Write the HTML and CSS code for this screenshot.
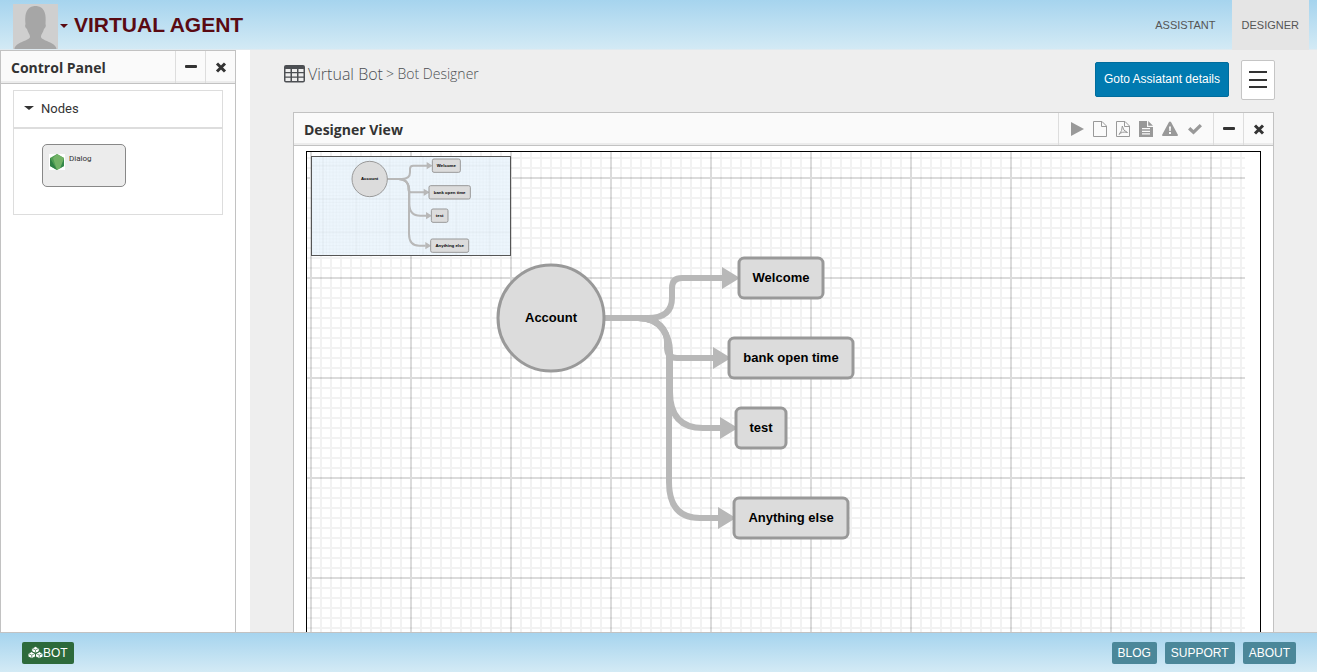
FILE: index.html
```html
<!DOCTYPE html>
<html lang="en">
<head>
<meta charset="utf-8">
<title>Virtual Agent</title>
<link rel="stylesheet" href="styles.css">
</head>
<body>
<header class="topbar">
  <button class="avatar" type="button" aria-label="Account menu">
    <svg width="45" height="45" viewBox="0 0 45 45"><rect width="45" height="45" fill="#cfcfcf"/><path d="M12.500 20C11 5 17 2 22.500 2S34 5 32.500 20C33.500 22 32 24 31 25C30 29 28 30 28 33C29 37 43 38 43.500 45H1.500C2 38 16 37 17 33C17 30 15 29 14 25C12.500 24 11.500 22 12.500 20Z" fill="#a6a6a6"/></svg>
    <span class="caret"></span>
  </button>
  <h1 class="brand">VIRTUAL AGENT</h1>
  <nav class="topnav">
    <a href="#assistant">ASSISTANT</a>
    <a href="#designer" class="active">DESIGNER</a>
  </nav>
</header>

<div class="body">
  <aside class="sidebar">
    <section class="panel side-panel">
      <div class="panel-head">
        <h2>Control Panel</h2>
        <button class="tool" type="button" aria-label="Collapse"><svg width="12" height="12"><rect y="4" width="12" height="3" rx="1"/></svg></button>
        <button class="tool" type="button" aria-label="Close"><svg width="12" height="12"><path d="M2 2.500L10 10.500M10 2.500L2 10.500"/></svg></button>
      </div>
      <div class="palette">
        <button class="palette-head" type="button"><span class="caret"></span>Nodes</button>
        <div class="palette-body">
          <div class="node-card">
            <svg width="16" height="16" viewBox="0 0 16 16"><rect width="16" height="16" fill="#fff"/><path d="M8 0L15 4V12L8 16L1 12V4Z" fill="#4f9d52"/><path d="M8 0L15 4L12 13.700L8 16L4 4Z" fill="#72b266"/><path d="M1 4L8 16L1 12Z" fill="#2f8044"/><path d="M15 5V12L11 14.200Z" fill="#35884a"/></svg>
            <span>Dialog</span>
          </div>
        </div>
      </div>
    </section>
  </aside>

  <main class="content">
    <div class="page-head">
      <div class="crumbs">
        <svg width="21" height="18" viewBox="0 0 21 18"><path fill="#4c4f53" fill-rule="evenodd" d="M2 0H19Q21 0 21 2V15.500Q21 17.500 19 17.500H2Q0 17.500 0 15.500V2Q0 0 2 0ZM1.500 4H6.500V7H1.500ZM8 4H13V7H8ZM14.500 4H19.500V7H14.500ZM1.500 8.300H6.500V11.500H1.500ZM8 8.300H13V11.500H8ZM14.500 8.300H19.500V11.500H14.500ZM1.500 12.800H6.500V16H1.500ZM8 12.800H13V16H8ZM14.500 12.800H19.500V16H14.500Z"/></svg>
        <span class="crumb-root">Virtual Bot</span>
        <span class="crumb-page">&gt; Bot Designer</span>
      </div>
      <div class="actions">
        <button class="primary" type="button">Goto Assiatant details</button>
        <button class="menu" type="button" aria-label="Menu"><svg width="18" height="18"><path d="M0 1H18M0 9H18M0 16H18" stroke="#333" stroke-width="2"/></svg></button>
      </div>
    </div>

    <section class="panel view-panel">
      <div class="panel-head">
        <h2>Designer View</h2>
        <div class="tools">
          <button type="button" aria-label="Run"><svg width="14" height="16"><path d="M1 1L14 8L1 15Z"/></svg></button>
          <button type="button" aria-label="New"><svg class="line" width="14" height="16"><path d="M.500.500H9L13.500 5V15.500H.500ZM8.500.500V5.500H13.500"/></svg></button>
          <button type="button" aria-label="Export PDF"><svg class="line" width="14" height="16"><path d="M.500.500H9L13.500 5V15.500H.500ZM8.500.500V5.500H13.500M3 13.500Q6.500 10 6.300 5Q7 10 11.500 11.500Q6 10 3 13.500"/></svg></button>
          <button type="button" aria-label="Text file"><svg width="14" height="16"><path fill-rule="evenodd" d="M0 0H8V6H14V16H0ZM3 7V8.200H11V7ZM3 9.700V11H11V9.700ZM3 12.300V13.500H11V12.300ZM9.200 0L14 4.800H9.200Z"/></svg></button>
          <button type="button" aria-label="Warnings"><svg width="16" height="16"><path fill-rule="evenodd" d="M7 1Q8 0 9 1L16 14Q16 15 15 15H1Q0 15 0 14ZM7 5.500L7.300 10H8.700L9 5.500ZM7 11V13H9V11Z"/></svg></button>
          <button type="button" aria-label="Validate"><svg width="16" height="16"><path d="M1 8.500L3.300 6L6.500 9L12.700 3L15 5.300L6.500 13.500Z"/></svg></button>
        </div>
        <button class="tool" type="button" aria-label="Collapse view"><svg width="12" height="12"><rect y="4" width="12" height="3" rx="1"/></svg></button>
        <button class="tool" type="button" aria-label="Close view"><svg width="12" height="12"><path d="M2 2.500L10 10.500M10 2.500L2 10.500"/></svg></button>
      </div>
      <div class="canvas">
        <svg class="diagram" role="img" aria-label="Bot flow">
          <defs>
            <pattern id="grid" width="100" height="100" x="4" y="26" patternUnits="userSpaceOnUse" patternTransform="translate(-50 -50)">
              <path class="minor" d="M10 0V100M20 0V100M30 0V100M40 0V100M60 0V100M70 0V100M80 0V100M90 0V100M0 0V100M100 0V100M0 10H100M0 20H100M0 30H100M0 40H100M0 60H100M0 70H100M0 80H100M0 90H100M0 0H100M0 100H100"/>
              <path class="major" d="M50 0V100M0 50H100"/>
            </pattern>
          </defs>
          <rect width="100%" height="100%" fill="url(#grid)"/>
          <g id="flow" class="flow">
            <g class="links">
              <path d="M297 166H341Q365 166 365 146V136Q365 126 375 126H416"/>
              <path d="M297 166H331C352 166 360 178 360 190V195Q360 206 370 206H407"/>
              <path d="M297 166H331C356 166 363 186 363 200V240Q363 276 396 276H414"/>
              <path d="M297 166H331C356 166 362 186 362 200V330Q362 366 393 366H412"/>
            </g>
            <path class="arrow" d="M415 115L433 126L415 137ZM406 195L424 206L406 217ZM413 265L431 276L413 287ZM411 355L429 366L411 377Z"/>
            <circle class="node" cx="244" cy="166" r="53"/>
            <rect class="node" x="432" y="106" width="84" height="40" rx="5"/>
            <rect class="node" x="422" y="186" width="124" height="40" rx="5"/>
            <rect class="node" x="429" y="256" width="50" height="40" rx="5"/>
            <rect class="node" x="427" y="346" width="114" height="40" rx="5"/>
            <text x="244" y="170">Account</text>
            <text x="474" y="130">Welcome</text>
            <text x="484" y="210">bank open time</text>
            <text x="454" y="280">test</text>
            <text x="484" y="370">Anything else</text>
          </g>
        </svg>
        <svg class="overview" viewBox="71 100 594 294" aria-hidden="true">
          <rect x="71" y="100" width="594" height="294" fill="url(#grid)" opacity=".6"/>
          <use href="#flow"/>
        </svg>
      </div>
    </section>
  </main>
</div>

<footer class="bottombar">
  <button class="bot" type="button"><svg width="15" height="13" viewBox="0 0 16 13"><path fill="#fff" stroke="#2d6a3b" d="M8 0L12 2V5.500L8 7.500L4 5.500V2ZM4 5.500L8 7.500V11L4 13L0 11V7.500ZM12 5.500L16 7.500V11L12 13L8 11V7.500Z"/><path fill="none" stroke="#2d6a3b" stroke-width=".7" d="M4.500 2L8 3.800L11.500 2M8 4V7M.500 7.500L4 9.300L7.500 7.500M4 9.500V13M8.500 7.500L12 9.300L15.500 7.500M12 9.500V13"/></svg>BOT</button>
  <nav class="links-nav">
    <a href="#blog">BLOG</a>
    <a href="#support">SUPPORT</a>
    <a href="#about">ABOUT</a>
  </nav>
</footer>
</body>
</html>
```
FILE: styles.css
```css
* { box-sizing: border-box; }
body {
  margin: 0;
  height: 100vh;
  display: flex;
  flex-direction: column;
  overflow: hidden;
  font-family: "Liberation Sans", Arial, sans-serif;
  font-size: 12px;
  color: #333;
  background: #fff;
}
button { font: inherit; color: inherit; padding: 0; border: 0; background: none; cursor: pointer; }
a { text-decoration: none; }
svg { display: block; flex: none; }
h1, h2 { margin: 0; }

.topbar {
  flex: none;
  height: 50px;
  display: flex;
  align-items: center;
  padding: 0 8px 0 13px;
  background: linear-gradient(#a6d4ee, #d3eaf5);
  border-bottom: 1px solid #e0eaf0;
}
.avatar { display: flex; align-items: center; gap: 2px; padding-top: 3px; }
.caret {
  border: 4px solid transparent;
  border-top-color: currentColor;
  border-bottom: 0;
}
.avatar .caret { color: #5a0a12; }
.brand { margin-left: 6px; font-size: 21px; color: #5a0a12; }
.topnav { display: flex; align-self: stretch; margin-left: auto; gap: 7px; }
.topnav a {
  display: flex;
  align-items: center;
  padding: 0 9px;
  font-size: 11px;
  color: #555;
}
.topnav .active { padding: 0 10px; background: #e5e5e5; margin-bottom: -1px; }

.body { flex: 1; min-height: 0; display: flex; overflow: hidden; }
.sidebar { flex: none; width: 250px; padding-right: 14px; display: flex; }
.side-panel { flex: 1; }
.panel { background: #fff; border: 1px solid #c2c2c2; border-bottom: 0; }
.panel-head {
  display: flex;
  height: 33px;
  background: #fafafa;
  border-bottom: 1px solid #c2c2c2;
  box-shadow: inset 0 -2px 0 #ececec;
}
.panel-head h2 {
  flex: 1;
  padding-left: 10px;
  font: 700 14px/34px "Open Sans", sans-serif;
}
.tool {
  width: 30px;
  display: flex;
  align-items: center;
  justify-content: center;
  border-left: 1px solid #ddd;
}
.tool svg { fill: #333; stroke: none; }
.tool path { stroke: #333; stroke-width: 3; }
.palette { margin: 6px 12px; border: 1px solid #ddd; }
.palette-head {
  width: 100%;
  height: 38px;
  display: flex;
  align-items: center;
  gap: 7px;
  padding: 0 0 2px 10px;
  border-bottom: 2px solid #ddd;
  font: 13px Roboto, sans-serif;
}
.palette-head .caret { border-width: 4px 5px 0; }
.palette-body { height: 85px; padding: 15px 28px; }
.node-card {
  width: 84px;
  height: 43px;
  display: flex;
  gap: 4px;
  padding: 9px 6px;
  border: 1px solid #888;
  border-radius: 5px;
  background: #ececec;
  font: 8px/10px Roboto, sans-serif;
}

.content { flex: 1; min-width: 0; padding: 10px 43px 0; background: #eee; }
.page-head { display: flex; justify-content: space-between; margin: 0 -1px 0 -9px; height: 52px; }
.crumbs {
  display: flex;
  align-items: center;
  height: 27px;
  gap: 3px;
  font-family: "Open Sans", sans-serif;
  font-weight: 300;
  color: #4c4f53;
}
.crumb-root { font-size: 16px; }
.crumb-page { font-size: 14px; }
.actions { display: flex; align-items: flex-start; gap: 12px; }
.primary {
  height: 35px;
  margin-top: 2px;
  padding: 0 8px 2px;
  color: #fff;
  background: #007ab0;
  border: 1px solid #006c9c;
  border-radius: 2px;
}
.menu {
  width: 34px;
  height: 40px;
  display: grid;
  place-items: center;
  background: #fff;
  border: 1px solid #c5c5c5;
  border-radius: 2px;
}
.view-panel { height: 560px; }
.tools {
  display: flex;
  align-items: center;
  gap: 9px;
  padding: 0 10px 0 11px;
  border-left: 1px solid #ddd;
  fill: #999;
}
.tools .line { fill: none; stroke: #999; }
.canvas {
  position: relative;
  height: 520px;
  margin: 5px 12px;
  padding-right: 15px;
  border: 1px solid #000;
}
.diagram { width: 100%; height: 100%; }
.minor, .major { fill: none; stroke-width: 2; }
.minor { stroke: #000; stroke-opacity: .05; }
.major { stroke: #000; stroke-opacity: .14; }
.links { fill: none; stroke: #b8b8b8; stroke-width: 6; }
.arrow { fill: #b8b8b8; }
.node { fill: #dcdcdc; stroke: #999; stroke-width: 3; }
.flow text {
  font: 700 13px "Liberation Sans", Arial, sans-serif;
  fill: #000;
  text-anchor: middle;
}
.overview {
  position: absolute;
  left: 4px;
  top: 4px;
  width: 200px;
  height: 100px;
  border: 1px solid #555;
  background: #edf6fd;
}

.bottombar {
  flex: none;
  height: 40px;
  display: flex;
  align-items: center;
  justify-content: space-between;
  padding: 0 21px 0 22px;
  background: linear-gradient(#a6d4ee, #d3eaf5);
  border-top: 1px solid #c2c2c2;
}
.bot, .links-nav a {
  display: flex;
  align-items: center;
  height: 22px;
  padding: 0 6px;
  border-radius: 2px;
  color: #fff;
  background: #2d6a3b;
}
.links-nav { display: flex; gap: 8px; }
.links-nav a { background: #4b8799; }
```
